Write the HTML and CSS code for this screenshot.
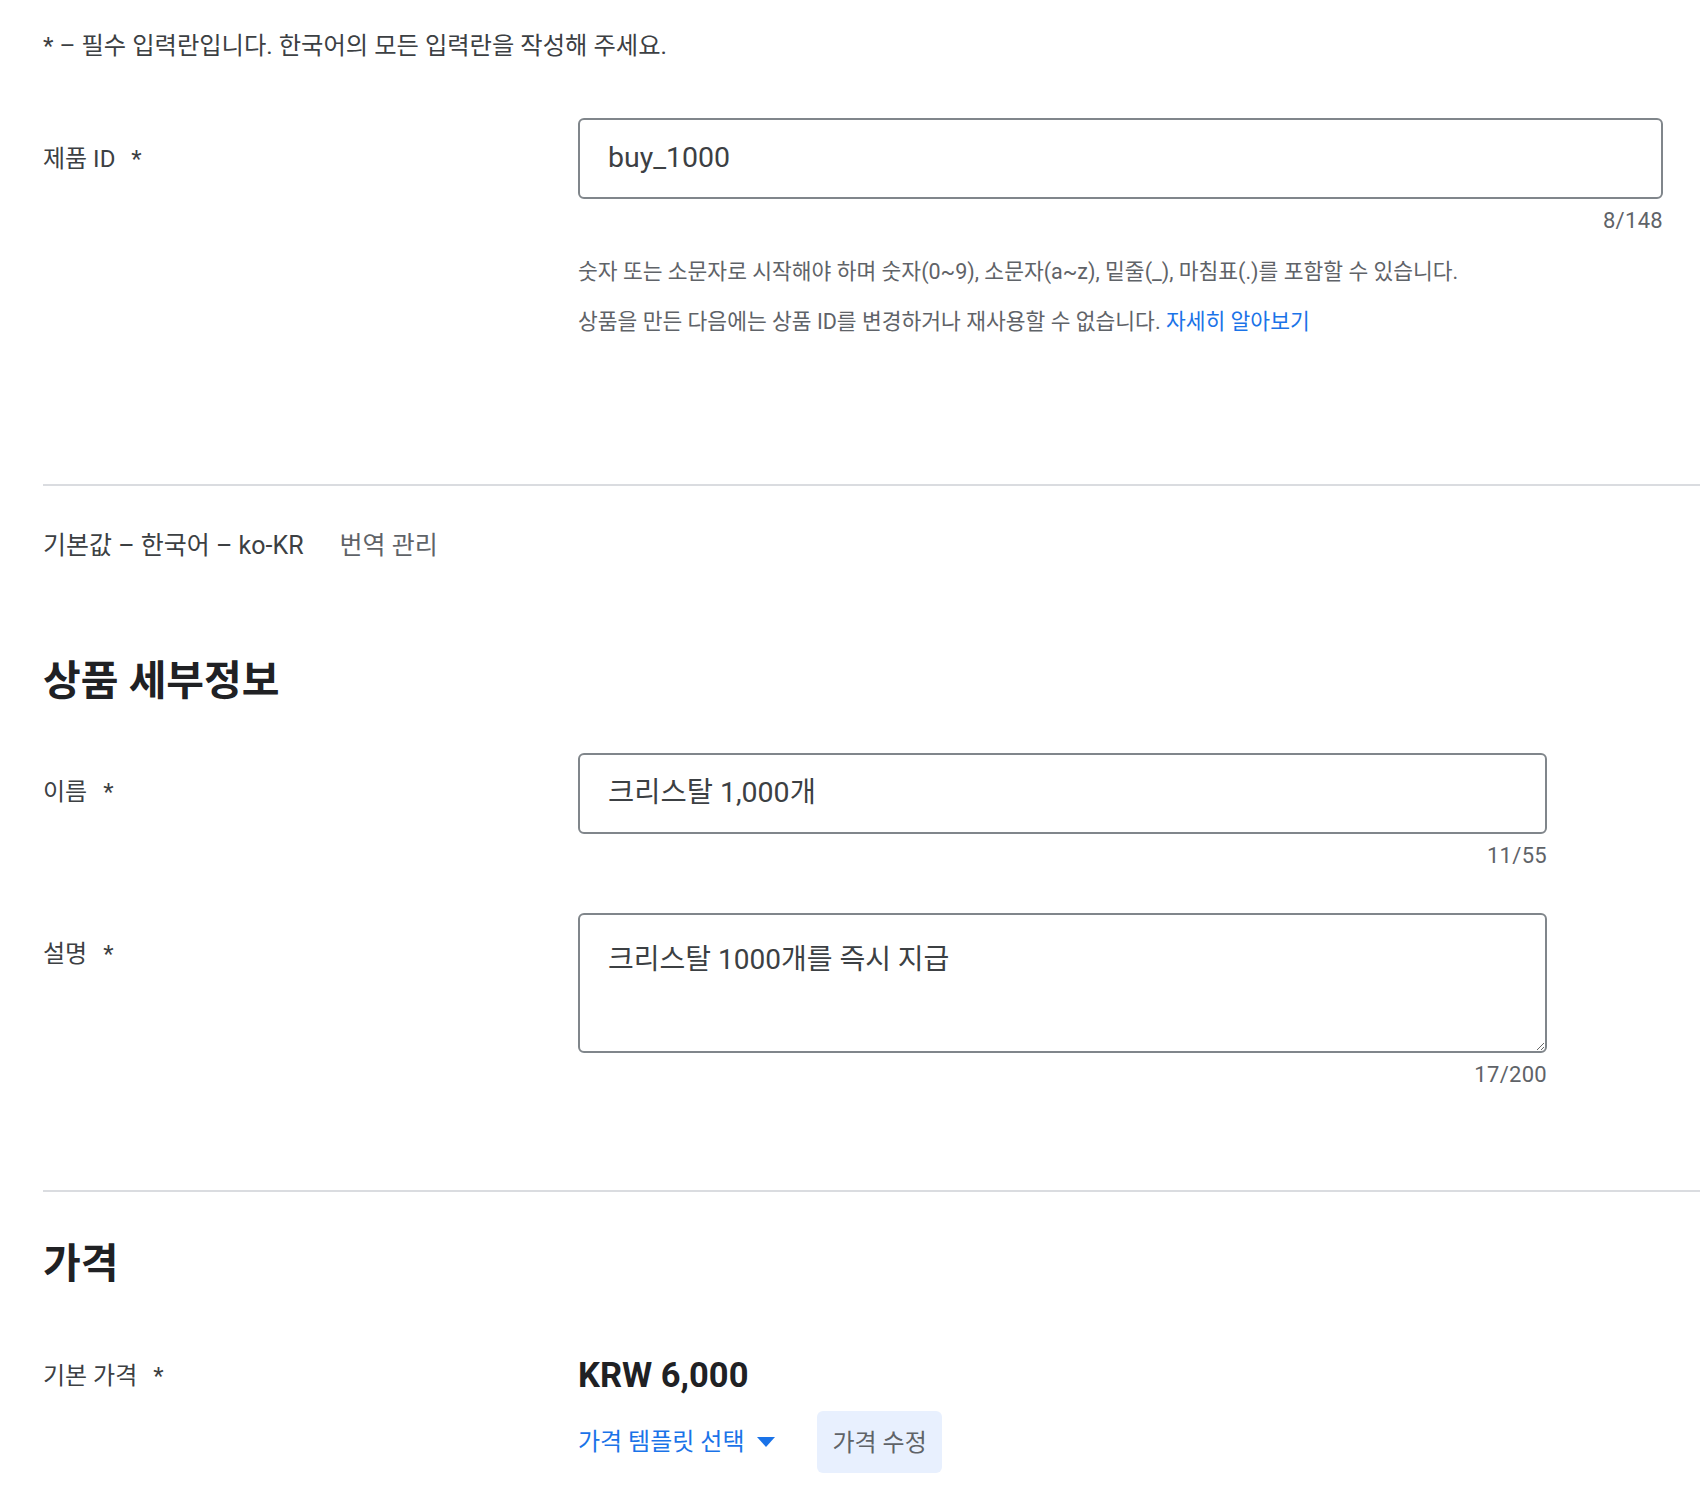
FILE: index.html
```html
<!DOCTYPE html>
<html lang="ko">
<head>
<meta charset="utf-8">
<title>상품 세부정보</title>
<link rel="stylesheet" href="styles.css">
</head>
<body>
<div class="page">
  <p class="note">* – 필수 입력란입니다. 한국어의 모든 입력란을 작성해 주세요.</p>

  <div class="row row-id">
    <div class="label">제품 ID <span class="req">*</span></div>
    <div class="field field-wide">
      <div class="input">buy_1000</div>
      <div class="counter">8/148</div>
      <p class="help first">숫자 또는 소문자로 시작해야 하며 숫자(0~9), 소문자(a~z), 밑줄(_), 마침표(.)를 포함할 수 있습니다.</p>
      <p class="help">상품을 만든 다음에는 상품 ID를 변경하거나 재사용할 수 없습니다. <a class="link" href="#">자세히 알아보기</a></p>
    </div>
  </div>

  <hr class="divider divider-1">

  <div class="lang">
    <span class="lang-name">기본값 – 한국어 – ko-KR</span>
    <span class="lang-manage">번역 관리</span>
  </div>

  <h2 class="heading heading-details">상품 세부정보</h2>

  <div class="row row-name">
    <div class="label">이름 <span class="req">*</span></div>
    <div class="field field-narrow">
      <div class="input input-ko">크리스탈 1,000개</div>
      <div class="counter">11/55</div>
    </div>
  </div>

  <div class="row row-desc">
    <div class="label">설명 <span class="req">*</span></div>
    <div class="field field-narrow">
      <textarea class="textarea">크리스탈 1000개를 즉시 지급</textarea>
      <div class="counter">17/200</div>
    </div>
  </div>

  <hr class="divider divider-2">

  <h2 class="heading heading-price">가격</h2>

  <div class="row row-price">
    <div class="label">기본 가격 <span class="req">*</span></div>
    <div class="field">
      <div class="price">KRW 6,000</div>
      <div class="actions">
        <a class="template" href="#">가격 템플릿 선택
          <svg class="caret" width="18" height="10" viewBox="0 0 18 10"><polygon points="0,0 18,0 9,10" fill="#1a73e8"/></svg>
        </a>
        <span class="edit-btn">가격 수정</span>
      </div>
    </div>
  </div>
</div>
</body>
</html>
```

FILE: styles.css
```css
html, body {
  margin: 0;
  padding: 0;
  background: #ffffff;
}

body {
  font-family: Roboto, "Noto Sans CJK KR", sans-serif;
  color: #3c4043;
  width: 1700px;
  overflow: hidden;
}

.page {
  padding: 0 0 40px 43px;
}

.note {
  margin: 30px 0 0 0;
  font-size: 24.3px;
  line-height: 32px;
  color: #3c4043;
}

.row {
  display: grid;
  grid-template-columns: 535px auto;
  align-items: start;
}

.label {
  font-size: 24px;
  line-height: 32px;
  color: #3c4043;
}

.req {
  margin-left: 10px;
}

.field {
  display: flex;
  flex-direction: column;
}

.field-wide {
  width: 1085px;
}

.field-narrow {
  width: 969px;
}

.input {
  box-sizing: border-box;
  height: 81px;
  border: 2px solid #80868b;
  border-radius: 6px;
  padding: 0 28px 3px 28px;
  display: flex;
  align-items: center;
  font-size: 28.5px;
  color: #3c4043;
}

.input-ko {
  padding-bottom: 9px;
}

.textarea {
  box-sizing: border-box;
  display: block;
  width: 100%;
  height: 140px;
  border: 2px solid #80868b;
  border-radius: 6px;
  padding: 25px 28px 20px 28px;
  font-family: Roboto, "Noto Sans CJK KR", sans-serif;
  font-size: 28px;
  line-height: 40px;
  color: #3c4043;
  resize: vertical;
  outline: none;
  margin: 0;
}

.counter {
  margin-top: 6px;
  text-align: right;
  font-size: 22px;
  line-height: 32px;
  color: #5f6368;
  letter-spacing: 0.3px;
}

.help {
  margin: 18px 0 0 0;
  font-size: 21.5px;
  line-height: 32px;
  color: #5f6368;
}

.help.first {
  margin-top: 19px;
}

.link {
  color: #1a73e8;
  text-decoration: none;
}

.row-id {
  margin-top: 56px;
}

.row-id .label {
  padding-top: 25px;
}

.divider {
  border: 0;
  height: 2px;
  background: #dadce0;
  margin: 0;
}

.divider-1 {
  margin-top: 146px;
}

.lang {
  margin-top: 44px;
  font-size: 25px;
  line-height: 32px;
  display: flex;
  gap: 36px;
}

.lang-name {
  color: #3c4043;
}

.lang-manage {
  color: #5f6368;
}

.heading {
  margin: 0;
  font-size: 41px;
  line-height: 48px;
  font-weight: 700;
  color: #202124;
}

.heading-details {
  margin-top: 95px;
}

.row-name {
  margin-top: 48px;
}

.row-name .label {
  padding-top: 23px;
}

.row-desc {
  margin-top: 41px;
}

.row-desc .label {
  padding-top: 25px;
}

.divider-2 {
  margin-top: 99px;
}

.heading-price {
  margin-top: 48px;
}

.row-price {
  margin-top: 65px;
}

.row-price .label {
  padding-top: 7px;
}

.price {
  font-size: 34.5px;
  line-height: 44px;
  font-weight: 700;
  color: #202124;
}

.actions {
  margin-top: 14px;
  display: flex;
  align-items: center;
  gap: 42px;
}

.template {
  display: flex;
  align-items: center;
  gap: 13px;
  color: #1a73e8;
  text-decoration: none;
  font-size: 24px;
  line-height: 32px;
}

.caret {
  display: block;
}

.edit-btn {
  box-sizing: border-box;
  height: 62px;
  padding: 0 15px 3px 15px;
  display: flex;
  align-items: center;
  background: #e8f0fe;
  border-radius: 6px;
  font-size: 24px;
  color: #5f6368;
}
```
